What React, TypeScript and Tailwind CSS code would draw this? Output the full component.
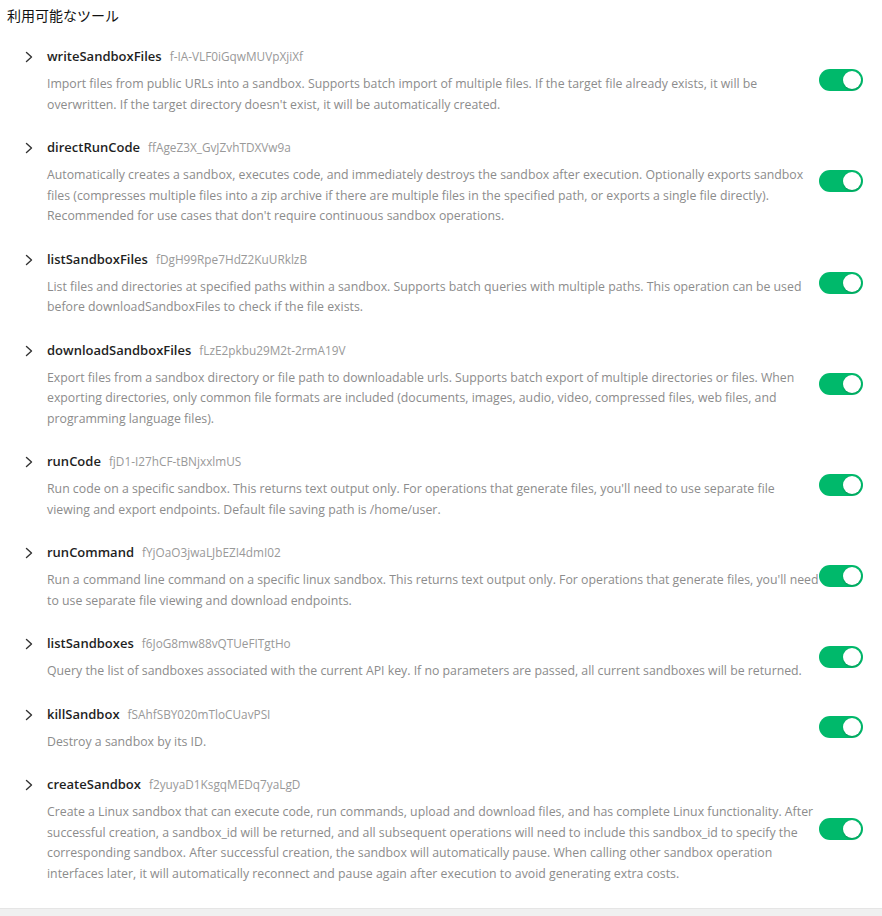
import React from 'react'

type Tool = {
  name: string
  id: string
  desc: string
}

const tools: Tool[] = [
  {
    name: 'writeSandboxFiles',
    id: 'f-IA-VLF0iGqwMUVpXjiXf',
    desc: "Import files from public URLs into a sandbox. Supports batch import of multiple files. If the target file already exists, it will be overwritten. If the target directory doesn't exist, it will be automatically created.",
  },
  {
    name: 'directRunCode',
    id: 'ffAgeZ3X_GvJZvhTDXVw9a',
    desc: "Automatically creates a sandbox, executes code, and immediately destroys the sandbox after execution. Optionally exports sandbox files (compresses multiple files into a zip archive if there are multiple files in the specified path, or exports a single file directly). Recommended for use cases that don't require continuous sandbox operations.",
  },
  {
    name: 'listSandboxFiles',
    id: 'fDgH99Rpe7HdZ2KuURklzB',
    desc: 'List files and directories at specified paths within a sandbox. Supports batch queries with multiple paths. This operation can be used before downloadSandboxFiles to check if the file exists.',
  },
  {
    name: 'downloadSandboxFiles',
    id: 'fLzE2pkbu29M2t-2rmA19V',
    desc: 'Export files from a sandbox directory or file path to downloadable urls. Supports batch export of multiple directories or files. When exporting directories, only common file formats are included (documents, images, audio, video, compressed files, web files, and programming language files).',
  },
  {
    name: 'runCode',
    id: 'fjD1-I27hCF-tBNjxxlmUS',
    desc: "Run code on a specific sandbox. This returns text output only. For operations that generate files, you'll need to use separate file viewing and export endpoints. Default file saving path is /home/user.",
  },
  {
    name: 'runCommand',
    id: 'fYjOaO3jwaLJbEZI4dmI02',
    desc: "Run a command line command on a specific linux sandbox. This returns text output only. For operations that generate files, you'll need to use separate file viewing and download endpoints.",
  },
  {
    name: 'listSandboxes',
    id: 'f6JoG8mw88vQTUeFITgtHo',
    desc: 'Query the list of sandboxes associated with the current API key. If no parameters are passed, all current sandboxes will be returned.',
  },
  {
    name: 'killSandbox',
    id: 'fSAhfSBY020mTloCUavPSI',
    desc: 'Destroy a sandbox by its ID.',
  },
  {
    name: 'createSandbox',
    id: 'f2yuyaD1KsgqMEDq7yaLgD',
    desc: 'Create a Linux sandbox that can execute code, run commands, upload and download files, and has complete Linux functionality. After successful creation, a sandbox_id will be returned, and all subsequent operations will need to include this sandbox_id to specify the corresponding sandbox. After successful creation, the sandbox will automatically pause. When calling other sandbox operation interfaces later, it will automatically reconnect and pause again after execution to avoid generating extra costs.',
  },
]

function Chevron() {
  return (
    <svg width="10" height="12" viewBox="0 0 10 12" fill="none" className="shrink-0">
      <path d="M2.5 1.5 L7.5 6 L2.5 10.5" stroke="#333" strokeWidth="1.4" strokeLinecap="round" strokeLinejoin="round" />
    </svg>
  )
}

function Toggle() {
  return (
    <div className="flex h-[22px] w-[44px] items-center justify-end rounded-full bg-[#00b96b] pr-[2px]">
      <div className="h-[18px] w-[18px] rounded-full bg-white shadow-[0_1px_2px_rgba(0,35,11,0.2)]" />
    </div>
  )
}

function ToolRow({ tool }: { tool: Tool }) {
  return (
    <div className="relative flex items-start">
      <div className="flex h-[24px] w-[47px] items-center justify-end pr-[13px]">
        <Chevron />
      </div>
      <div className="w-[773px]">
        <div className="flex h-[24px] items-baseline gap-[8px] pt-[2px]">
          <span className="text-[13px] font-semibold text-[#1f1f1f]">{tool.name}</span>
          <span className="text-[11.8px] text-[#999]">{tool.id}</span>
        </div>
        <p className="mt-[5px] text-[12.3px] leading-[20.5px] text-[#8c8c8c]">{tool.desc}</p>
      </div>
      <div className="absolute right-[19px] top-1/2 -translate-y-1/2">
        <Toggle />
      </div>
    </div>
  )
}

export default function App() {
  return (
    <div className="flex h-[916px] w-[882px] flex-col bg-white font-['Open_Sans',sans-serif]">
      <div className="flex-1">
        <h1 className="px-[7px] pt-[5px] text-[14px] leading-[20px] text-[#111] font-['Noto_Sans_CJK_JP',sans-serif]">利用可能なツール</h1>
        <div className="mt-[20px] flex flex-col gap-[21px]">
          {tools.map((t) => (
            <ToolRow key={t.name} tool={t} />
          ))}
        </div>
      </div>
      <div className="h-[8px] border-t border-[#e5e5e5] bg-[#f0f0f0]" />
    </div>
  )
}
